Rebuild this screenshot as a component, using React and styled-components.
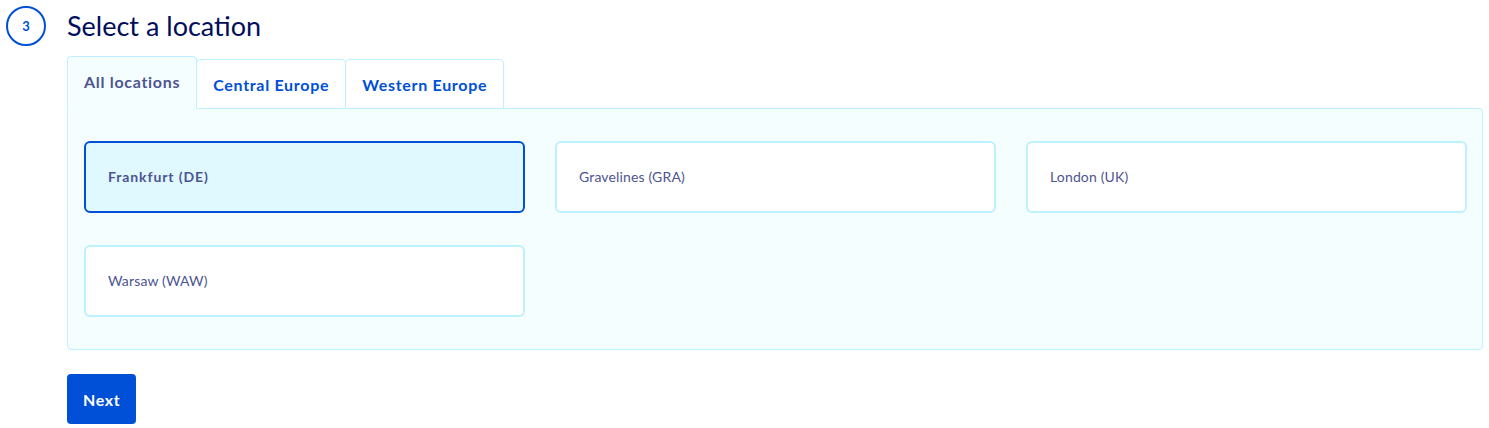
import React, { useState } from "react";
import styled, { createGlobalStyle } from "styled-components";

const GlobalStyle = createGlobalStyle`
  * { box-sizing: border-box; }
  body {
    margin: 0;
    background: #ffffff;
    font-family: "Lato", "Open Sans", sans-serif;
  }
`;

const tabs = ["All locations", "Central Europe", "Western Europe"];

const locations = [
  "Frankfurt (DE)",
  "Gravelines (GRA)",
  "London (UK)",
  "Warsaw (WAW)",
];

const App = () => {
  const [tab, setTab] = useState(0);
  const [selected, setSelected] = useState(0);

  return (
    <>
      <GlobalStyle />
      <Wrapper>
        <Header>
          <StepBadge>3</StepBadge>
          <Title>Select a location</Title>
        </Header>
        <Body>
          <TabList>
            {tabs.map((t, i) => (
              <Tab key={t} active={i === tab} onClick={() => setTab(i)}>
                {t}
              </Tab>
            ))}
          </TabList>
          <Panel>
            <CardGrid>
              {locations.map((l, i) => (
                <Card
                  key={l}
                  selected={i === selected}
                  onClick={() => setSelected(i)}
                >
                  {l}
                </Card>
              ))}
            </CardGrid>
          </Panel>
          <NextButton>Next</NextButton>
        </Body>
      </Wrapper>
    </>
  );
};

export default App;

const Wrapper = styled.div`
  padding: 6px 6px 0 6px;
  width: 1489px;
`;

const Header = styled.div`
  display: flex;
  align-items: center;
  gap: 21px;
  height: 40px;
`;

const StepBadge = styled.div`
  width: 40px;
  height: 40px;
  border-radius: 50%;
  border: 2px solid #0050d7;
  color: #0050d7;
  font-size: 13px;
  font-weight: 700;
  display: flex;
  align-items: center;
  justify-content: center;
`;

const Title = styled.h1`
  margin: 0;
  font-size: 27px;
  font-weight: 400;
  color: #000e5c;
  line-height: 1;
  padding-bottom: 2px;
`;

const Body = styled.div`
  padding-left: 61px;
  margin-top: 10px;
  width: 1477px;
`;

const TabList = styled.div`
  display: flex;
  align-items: flex-end;
  height: 53px;
  margin-bottom: -1px;
  position: relative;
  z-index: 1;
`;

const Tab = styled.button`
  font-family: inherit;
  font-size: 16px;
  font-weight: 700;
  letter-spacing: 0.7px;
  cursor: pointer;
  height: ${(p) => (p.active ? "53px" : "50px")};
  padding: ${(p) => (p.active ? "0 16px 3px" : "0 16px")};
  border: 1px solid #bef1ff;
  border-bottom-color: ${(p) => (p.active ? "#f5feff" : "#bef1ff")};
  border-radius: 4px 4px 0 0;
  background: ${(p) => (p.active ? "#f5feff" : "#ffffff")};
  color: ${(p) => (p.active ? "#4d5592" : "#0050d7")};
  & + & {
    margin-left: -1px;
  }
`;

const Panel = styled.div`
  background: #f5feff;
  border: 1px solid #bef1ff;
  border-radius: 0 4px 4px 4px;
  padding: 32px 16px 32px 16px;
`;

const CardGrid = styled.div`
  display: grid;
  grid-template-columns: repeat(3, 441px);
  column-gap: 30px;
  row-gap: 32px;
`;

const Card = styled.div`
  height: 72px;
  display: flex;
  align-items: center;
  padding-left: 22px;
  padding-bottom: 2px;
  border-radius: 6px;
  border: 2px solid ${(p) => (p.selected ? "#0050d7" : "#bef1ff")};
  background: ${(p) => (p.selected ? "#e0f8ff" : "#ffffff")};
  color: #4d5592;
  font-size: 14px;
  font-weight: ${(p) => (p.selected ? 700 : 400)};
  letter-spacing: ${(p) => (p.selected ? "0.9px" : "0.15px")};
  cursor: pointer;
`;

const NextButton = styled.button`
  margin-top: 24px;
  height: 50px;
  padding: 0 16px;
  border: none;
  border-radius: 4px;
  background: #0050d7;
  color: #ffffff;
  font-family: inherit;
  font-size: 16px;
  font-weight: 700;
  letter-spacing: 0.6px;
  cursor: pointer;
`;
